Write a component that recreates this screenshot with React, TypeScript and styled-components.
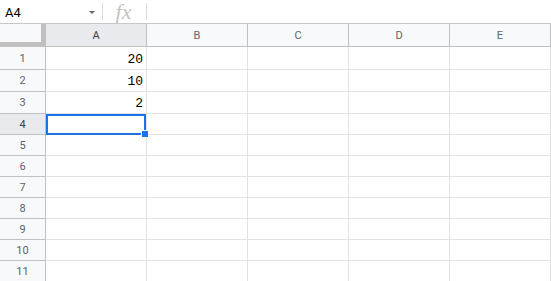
import * as React from "react"
import styled, { createGlobalStyle } from "styled-components"

const GlobalStyle = createGlobalStyle`
  *, *::before, *::after {
    box-sizing: border-box;
  }
  html, body {
    margin: 0;
    padding: 0;
    background: #ffffff;
    font-family: Roboto, "Liberation Sans", Arial, sans-serif;
    overflow: hidden;
  }
`

const COLUMNS = ["A", "B", "C", "D", "E"]
// heights include the 1px bottom border
const ROW_HEIGHTS = [23, 22, 22, 21, 21, 21, 21, 21, 21, 21, 21]
const VALUES: Record<string, string> = { A1: "20", A2: "10", A3: "2" }
const ACTIVE = { col: "A", row: 4 }

const Page = styled.div`
  width: 551px;
  height: 281px;
  overflow: hidden;
  display: flex;
  flex-direction: column;
`

const FormulaBar = styled.div`
  height: 24px;
  flex: none;
  display: flex;
  align-items: center;
  border-bottom: 1px solid #c7c7c7;
`

const NameBox = styled.div`
  width: 102px;
  display: flex;
  align-items: center;
  justify-content: space-between;
  padding: 1px 7px 0 5px;
  font-size: 13px;
  color: #000;
`

const DropArrow = styled.span`
  width: 0;
  height: 0;
  border-left: 3px solid transparent;
  border-right: 3px solid transparent;
  border-top: 3px solid #666;
  margin-top: 1px;
`

const Divider = styled.div`
  width: 1px;
  height: 17px;
  background: #dadce0;
`

const FxBox = styled.div`
  width: 43px;
  height: 23px;
  display: flex;
  align-items: center;
  justify-content: center;
  font-family: "Liberation Serif", "DejaVu Serif", serif;
  font-style: italic;
  font-size: 22px;
  color: #c4c4c4;
  line-height: 23px;
  padding-right: 2px;
`

const Grid = styled.div`
  display: grid;
  grid-template-columns: 46px repeat(5, 101px) 1fr;
`

const Corner = styled.div`
  height: 23px;
  background: #f8f9fa;
  border-right: 1px solid #c0c0c0;
  border-bottom: 1px solid #c0c0c0;
  position: relative;
  &::before {
    content: "";
    position: absolute;
    right: 0;
    top: 0;
    bottom: 0;
    width: 4px;
    background: #c0c0c0;
  }
  &::after {
    content: "";
    position: absolute;
    left: 0;
    right: 0;
    bottom: 0;
    height: 4px;
    background: #c0c0c0;
  }
`

const ColHeader = styled.div<{ $active?: boolean }>`
  height: 23px;
  background: ${(p) => (p.$active ? "#e8eaed" : "#f8f9fa")};
  border-right: 1px solid #c0c0c0;
  border-bottom: 1px solid #c0c0c0;
  display: flex;
  align-items: center;
  justify-content: center;
  font-size: 11px;
  color: ${(p) => (p.$active ? "#3c4043" : "#5f6368")};
`

const RowHeader = styled.div<{ $active?: boolean; $h: number }>`
  height: ${(p) => p.$h}px;
  background: ${(p) => (p.$active ? "#e8eaed" : "#f8f9fa")};
  border-right: 1px solid #c0c0c0;
  border-bottom: 1px solid #c0c0c0;
  display: flex;
  align-items: center;
  justify-content: center;
  font-size: 11px;
  color: ${(p) => (p.$active ? "#3c4043" : "#5f6368")};
`

const Cell = styled.div<{ $h: number }>`
  height: ${(p) => p.$h}px;
  border-right: 1px solid #e2e3e3;
  border-bottom: 1px solid #e2e3e3;
  display: flex;
  align-items: flex-end;
  justify-content: flex-end;
  padding: 0 3px 2px 0;
  font-family: "Liberation Mono", "DejaVu Sans Mono", monospace;
  font-size: 13px;
  line-height: 15px;
  color: #000;
  position: relative;
`

const Selection = styled.div`
  position: absolute;
  left: 0;
  top: 0;
  right: 0;
  bottom: -1px;
  border: 2px solid #1a73e8;
  pointer-events: none;
`

const Handle = styled.div`
  position: absolute;
  right: -4px;
  bottom: -4px;
  width: 7px;
  height: 7px;
  background: #1a73e8;
  border-top: 1px solid #ffffff;
  border-left: 1px solid #ffffff;
  z-index: 1;
`

const Spacer = styled.div<{ $h: number; $header?: boolean }>`
  height: ${(p) => p.$h}px;
  background: ${(p) => (p.$header ? "#f8f9fa" : "#fff")};
  border-bottom: 1px solid ${(p) => (p.$header ? "#c0c0c0" : "#e2e3e3")};
`

const App = () => {
  return (
    <Page>
      <GlobalStyle />
      <FormulaBar>
        <NameBox>
          <span>A4</span>
          <DropArrow />
        </NameBox>
        <Divider />
        <FxBox>fx</FxBox>
        <Divider />
      </FormulaBar>
      <Grid>
        <Corner />
        {COLUMNS.map((c) => (
          <ColHeader key={c} $active={c === ACTIVE.col}>
            {c}
          </ColHeader>
        ))}
        <Spacer $h={23} $header />
        {ROW_HEIGHTS.map((h, i) => {
          const row = i + 1
          return (
            <React.Fragment key={row}>
              <RowHeader $h={h} $active={row === ACTIVE.row}>
                {row}
              </RowHeader>
              {COLUMNS.map((c) => {
                const isActive = c === ACTIVE.col && row === ACTIVE.row
                return (
                  <Cell key={c} $h={h}>
                    {VALUES[c + row]}
                    {isActive && (
                      <Selection>
                        <Handle />
                      </Selection>
                    )}
                  </Cell>
                )
              })}
              <Spacer $h={h} />
            </React.Fragment>
          )
        })}
      </Grid>
    </Page>
  )
}

export default App
